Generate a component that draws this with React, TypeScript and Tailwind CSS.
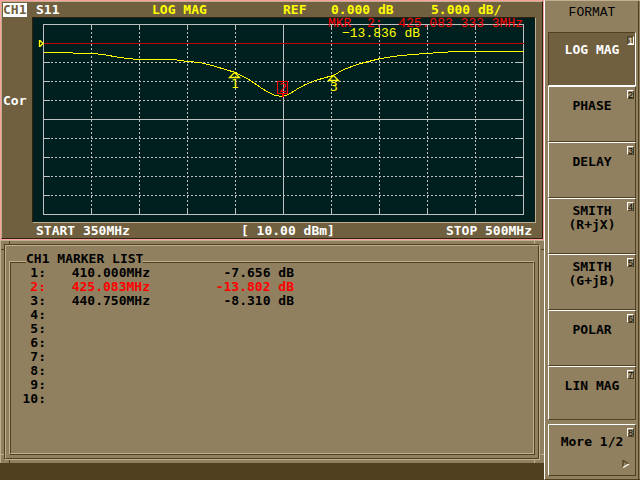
import React, { useState } from 'react';
import clsx from 'clsx';

type Marker = { id: number; freq: string; value: string };

const MARKERS: Marker[] = [
  { id: 1, freq: '410.000MHz', value: '-7.656 dB' },
  { id: 2, freq: '425.083MHz', value: '-13.802 dB' },
  { id: 3, freq: '440.750MHz', value: '-8.310 dB' },
  ...Array.from({ length: 7 }, (_, i) => ({ id: i + 4, freq: '', value: '' })),
];

const FORMATS = [['LOG MAG'], ['PHASE'], ['DELAY'], ['SMITH', '(R+jX)'], ['SMITH', '(G+jB)'], ['POLAR'], ['LIN MAG']];

const TRACE =
  '43,52 72,52 73,53 91,53 103,54 119,57 137,59 173,59 187,61 200,62 215,66 235,72 250,80 260,87 268,92 275,95 281,96 288,94 296,89 305,84 315,80 325,77 333,75 343,69 360,63 380,58 400,55 425,53 455,51 523,51';

const COLS = Array.from({ length: 9 }, (_, i) => 91 + i * 48);
const ROWS = Array.from({ length: 9 }, (_, i) => 43 + i * 19);

function Plot() {
  return (
    <svg viewBox="33 18 502 204" className="block w-full h-auto overflow-visible">
      <g fill="none" stroke="#c0c0c0" shapeRendering="crispEdges">
        {COLS.map((x, i) => (
          <g key={x}>
            <path d={`M${x}.5 24v190`} strokeDasharray={i === 4 ? undefined : '2 2'} />
            <path d={`M${x}.5 24v6M${x}.5 208v6`} />
          </g>
        ))}
        {ROWS.slice(1).map((y, i) => (
          <g key={y}>
            <path d={`M43 ${y}.5h480`} strokeDasharray={i === 3 ? undefined : '2 2'} />
            <path d={`M43 ${y}.5h7M517 ${y}.5h7`} />
          </g>
        ))}
        <rect x="43.5" y="24.5" width="480" height="190" />
      </g>
      <rect x="44" y="43" width="480" height="1" fill="#c00000" />

      <path d="M39.5 40v7M40 40.5l3 3-3 3" fill="none" stroke="#ffff00" strokeWidth="1.3" />
      <polyline points={TRACE} transform="translate(0.5 0.5)" fill="none" stroke="#ffff00" shapeRendering="crispEdges" />

      {/* markers */}
      <g fill="none" stroke="#ffff00" strokeWidth="1.3">
        <path d="M234.5 72.5l-5 5h10z" />
        <path d="M333.5 75.5l-5 5h10z" />
      </g>
      <g fill="#ff0000">
        <path d="M277 81h11v13h-11zM278 82v11h9v-11z" fillRule="evenodd" />
        <rect x="282" y="94" width="2" height="3" />
      </g>
      <g className="font-['DejaVu_Sans_Mono'] font-normal text-[13px]" textAnchor="middle">
        <text x="235" y="88" fill="#ffff00">1</text>
        <text x="334" y="91" fill="#ffff00">3</text>
        <text x="283" y="92" fill="#ff0000">2</text>
      </g>
      <g className="font-['Liberation_Mono'] font-normal text-[13px]">
        <text x="523" y="27" textAnchor="end" fill="#ff0000">{'MKR\u00a0\u00a02:\u00a0\u00a0425.083 333 3MHz'}</text>
        <text x="420" y="37" textAnchor="end" fill="#ffff00">−13.836 dB</text>
      </g>
    </svg>
  );
}

function Chart() {
  return (
    <section className="border border-[#ffa0a0] bg-[#706040] text-white">
      <div className="border border-t-[#c0b090] border-l-[#c0b090] border-r-[#302010] border-b-[#302010]">
        <header className="h-[15px] grid grid-cols-[34px_116fr_131fr_48fr_100fr_111fr] items-center whitespace-pre text-[#ffff00]">
          <span className="ml-px w-6 h-3.5 leading-[14px] bg-white text-[#706040]">CH1</span>
          <span className="text-white">S11</span>
          <span>LOG MAG</span>
          <span>REF</span>
          <span>0.000 dB</span>
          <span>5.000 dB/</span>
        </header>
        <div className="flex">
          <div className="w-[30px] shrink-0 pt-[77px] pl-px">Cor</div>
          <div className="flex-1 mr-1.5 bg-[#002020] border border-t-[#302010] border-l-[#302010] border-r-[#c0b090] border-b-[#c0b090]">
            <Plot />
          </div>
        </div>
        <footer className="h-[15px] pl-[34px] pr-2.5 flex items-center justify-between whitespace-pre">
          <span>START 350MHz</span>
          <span>[ 10.00 dBm]</span>
          <span>STOP 500MHz</span>
        </footer>
      </div>
    </section>
  );
}

function MarkerList() {
  return (
    <section className="relative flex-1 flex border-t border-l border-[#c0b090] bg-[#908060] p-[3px] pr-1">
      {/* frame corner notches */}
      <span className="absolute left-2 top-0 w-px h-[3px] bg-[#504020]" />
      <span className="absolute left-0 top-2 w-[3px] h-px bg-[#504020]" />
      <span className="absolute right-[9px] top-0 w-px h-[3px] bg-[#c0b090]" />
      <span className="absolute right-0 top-2 w-[3px] h-px bg-[#504020]" />
      <span className="absolute left-0 bottom-2 w-[3px] h-px bg-[#c0b090]" />
      <span className="absolute left-2 bottom-0 w-px h-[3px] bg-[#504020]" />
      <span className="absolute right-0 bottom-2 w-[3px] h-px bg-[#c0b090]" />
      <span className="absolute right-[9px] bottom-0 w-px h-[3px] bg-[#c0b090]" />
      <div className="flex-1 flex border border-t-[#504020] border-l-[#504020] border-r-[#c0b090] border-b-[#c0b090]">
        <div className="flex-1 flex border border-t-[#c0b090] border-l-[#c0b090] border-r-[#504020] border-b-[#504020] px-[3px] pt-[15px] pb-[3px]">
          <div className="flex-1 flex border border-t-[#c0b090] border-l-[#c0b090] border-r-[#504020] border-b-[#504020]">
            <div className="flex-1 border border-t-[#504020] border-l-[#504020] border-r-[#c0b090] border-b-[#c0b090]">
              <h2 id="marker-list" className="relative -mt-[11px] ml-[15px] w-fit bg-[#908060]">CH1 MARKER LIST</h2>
              <table aria-labelledby="marker-list" className="text-right border-collapse">
                <tbody>
                  {MARKERS.map(m => (
                    <tr key={m.id} className={clsx(m.id === 2 && 'text-[#ff0000]')}>
                      <td className="p-0 w-[35px]">{m.id}:</td>
                      <td className="p-0 w-[104px]">{m.freq}</td>
                      <td className="p-0 w-36">{m.value}</td>
                    </tr>
                  ))}
                </tbody>
              </table>
            </div>
          </div>
        </div>
      </div>
    </section>
  );
}

type KeyProps = {
  index: number;
  lines: string[];
  className: string;
  labelClass: string;
  pressed?: boolean;
  more?: boolean;
  onClick?: () => void;
};

function SoftKey({ index, lines, className, labelClass, pressed, more, onClick }: KeyProps) {
  return (
    <button
      type="button"
      aria-pressed={pressed}
      onClick={onClick}
      className={clsx(
        'relative block w-full border font-bold',
        pressed
          ? 'bg-[#706040] text-white border-t-[#504020] border-l-[#504020] border-r-white border-b-white'
          : 'bg-[#908060] text-black border-t-white border-l-white border-r-[#504020] border-b-[#504020]',
        className,
      )}
    >
      <span className={clsx('absolute inset-x-0 top-0 flex flex-col items-center justify-center', labelClass)}>
        {lines.map(l => <span key={l}>{l}</span>)}
      </span>
      <span
        className={clsx(
          "absolute top-[3px] right-px w-[7px] h-[9px] border font-['Liberation_Sans'] font-normal text-[9px] leading-[8px] flex justify-center",
          pressed
            ? 'border-t-[#504020] border-l-[#504020] border-r-white border-b-white'
            : 'border-t-white border-l-white border-r-[#504020] border-b-[#504020] bg-[#a09070]',
        )}
      >
        {index}
      </span>
      {more && (
        <svg viewBox="0 0 8 8" className="absolute right-[5px] bottom-[7px] w-2 h-2" fill="none">
          <path d="M7 4L1 .5v7" stroke="#504020" strokeWidth="1.3" />
          <path d="M1 7.5L7 4" stroke="#fff" strokeWidth="1.3" />
        </svg>
      )}
    </button>
  );
}

function SoftKeys() {
  const [format, setFormat] = useState(0);
  return (
    <nav className="w-24 shrink-0 bg-[#908060] border-l border-l-white border-t border-t-[#c0b090] border-b border-b-[#504020] pl-[3px] flex">
      <div className="flex-1 pr-0.5 border-r border-r-[#504020] mr-px">
        <h2 className="h-[31px] pt-[5px] text-center font-['Liberation_Mono'] font-normal">FORMAT</h2>
        {FORMATS.map((lines, i) => (
          <SoftKey
            key={i}
            index={i + 1}
            lines={lines}
            pressed={format === i}
            onClick={() => setFormat(i)}
            className={i === 0 || i === FORMATS.length - 1 ? 'h-[54px]' : 'h-14'}
            labelClass={i === 0 ? 'h-[34px]' : 'h-[38px]'}
          />
        ))}
        <SoftKey index={8} lines={['More 1/2']} className="h-[52px] mt-1" labelClass="h-[34px]" more />
      </div>
    </nav>
  );
}

export default function App() {
  return (
    <div className="min-h-screen flex bg-[#504020] font-['DejaVu_Sans_Mono',monospace] font-bold text-[13px] leading-[14px] text-black">
      <main className="flex-1 flex flex-col pb-[17px]">
        <Chart />
        <MarkerList />
      </main>
      <SoftKeys />
    </div>
  );
}
